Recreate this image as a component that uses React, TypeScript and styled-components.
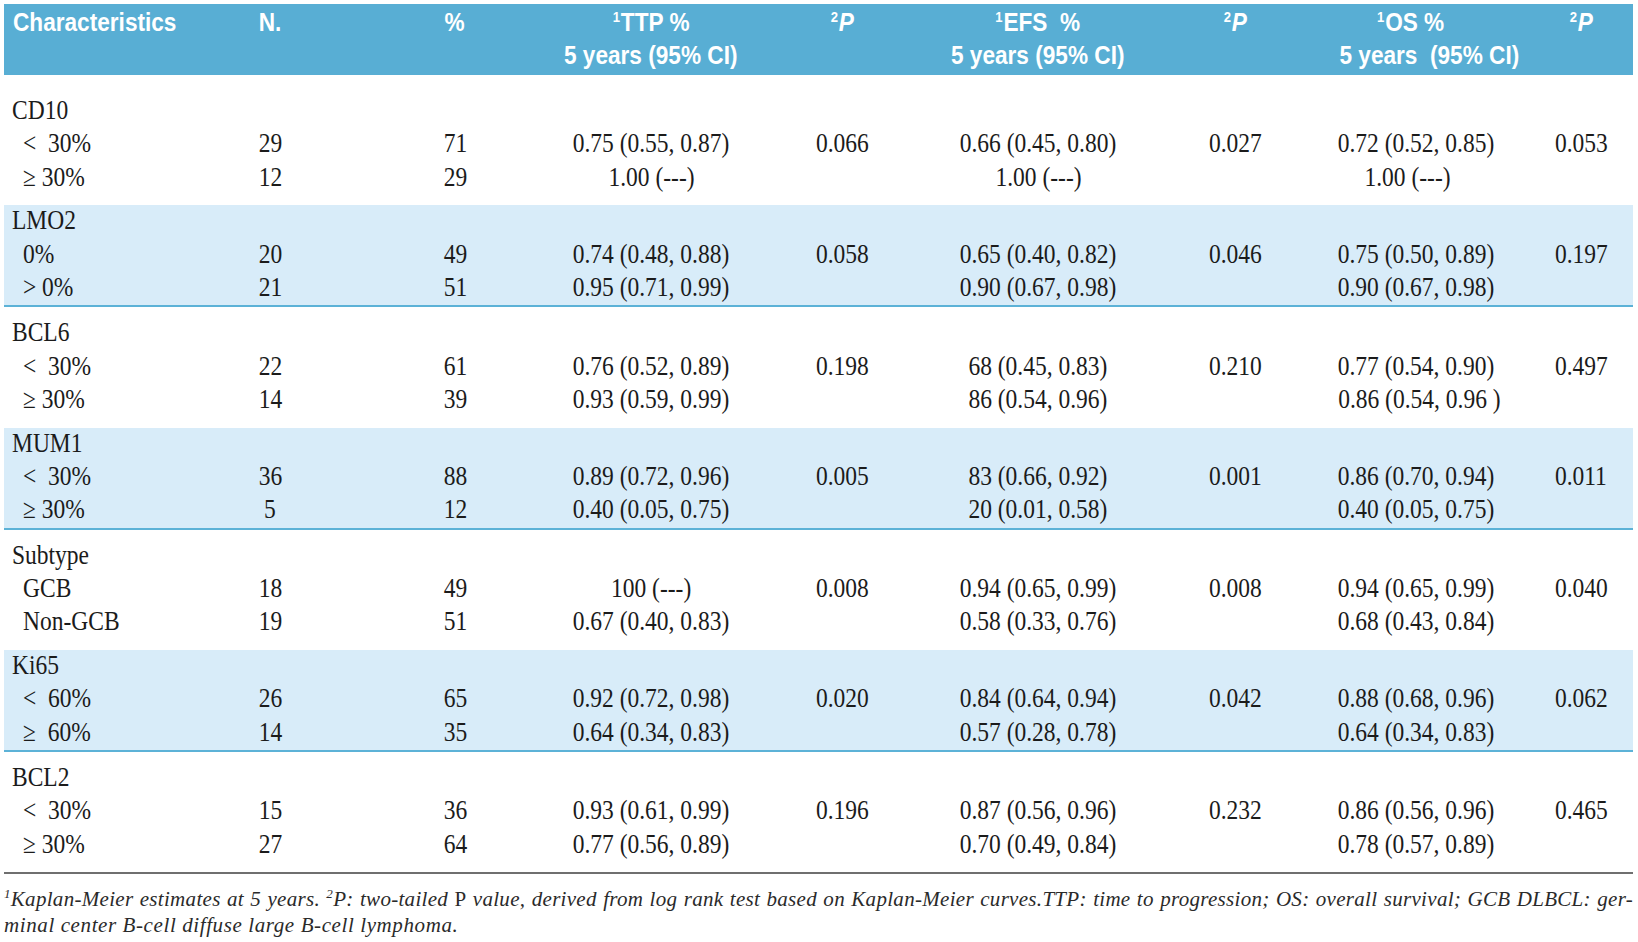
import React from 'react';
import styled, { createGlobalStyle } from 'styled-components';

const GlobalStyle = createGlobalStyle`
  html, body {
    margin: 0;
    padding: 0;
    background: #ffffff;
  }
  body {
    font-family: 'Liberation Serif', 'Times New Roman', serif;
    color: #1b1b1b;
  }
`;

// widths of the nine columns, table starts at x=4
const COLS = '176px 180px 190px 202px 180px 212px 182px 203px 104px';

const Page = styled.div`
  width: 1629px;
  padding: 4px 5px 0 4px;
`;

const Head = styled.div`
  display: grid;
  grid-template-columns: ${COLS};
  background: #58aed4;
  color: #ffffff;
  font-family: 'Liberation Sans', Arial, sans-serif;
  font-weight: bold;
  font-size: 26px;
  line-height: 33px;
  padding: 2px 0 3px;
`;

const HeadCell = styled.div<{ $left?: boolean; $padRight?: number }>`
  text-align: ${(p) => (p.$left ? 'left' : 'center')};
  padding-left: ${(p) => (p.$left ? '9px' : '0')};
  padding-right: ${(p) => p.$padRight || 0}px;
  white-space: pre;
`;

const Line = styled.div`
  height: 33px;
`;

const Squeeze = styled.span<{ $left?: boolean }>`
  display: inline-block;
  white-space: pre;
  transform: scaleX(0.87);
  transform-origin: ${(p) => (p.$left ? 'left' : 'center')} center;
`;

const Sup = styled.span`
  font-size: 15px;
  line-height: 0;
  vertical-align: 9px;
  margin-right: 1px;
`;

const ItalicP = styled.i`
  font-style: italic;
`;

const Body = styled.div`
  border-bottom: 2px solid #6f6f6f;
`;

const Group = styled.div<{ $band: boolean; $top: number; $bottom: number }>`
  background: ${(p) => (p.$band ? '#d8ecf9' : '#ffffff')};
  border-bottom: ${(p) => (p.$band ? '2px solid #5cb2d7' : 'none')};
  padding: ${(p) => p.$top}px 0 ${(p) => p.$bottom}px;
`;

const Row = styled.div`
  display: grid;
  grid-template-columns: ${COLS};
  height: 33.4px;
  font-size: 27px;
  line-height: 30px;
`;

const Cell = styled.div<{ $indent?: number; $padRight?: number }>`
  text-align: ${(p) => (p.$indent !== undefined ? 'left' : 'center')};
  padding-left: ${(p) => p.$indent || 0}px;
  padding-right: ${(p) => p.$padRight || 0}px;
  white-space: pre;
`;

const Note = styled.div`
  font-family: 'Liberation Serif', 'Times New Roman', serif;
  font-style: italic;
  font-size: 21px;
  line-height: 26px;
  color: #2a2a2a;
  padding: 12px 0 0 0;
`;

const NoteLine = styled.div<{ $justify?: boolean }>`
  text-align: ${(p) => (p.$justify ? 'justify' : 'left')};
  text-align-last: ${(p) => (p.$justify ? 'justify' : 'auto')};
  letter-spacing: ${(p) => (p.$justify ? '0.3px' : '0.6px')};
  white-space: nowrap;
`;

const NoteSup = styled.span`
  font-size: 13px;
  line-height: 0;
  vertical-align: 8px;
`;

const Upright = styled.span`
  font-style: normal;
`;

type Values = [string, string, string, string, string, string, string, string, string];

interface GroupData {
  name: string;
  band: boolean;
  top: number;
  bottom: number;
  rows: Values[];
}

const groups: GroupData[] = [
  {
    name: 'CD10',
    band: false,
    top: 20,
    bottom: 10,
    rows: [
      ['<  30%', '29', '71', '0.75 (0.55, 0.87)', '0.066', '0.66 (0.45, 0.80)', '0.027', '0.72 (0.52, 0.85)', '0.053'],
      ['≥ 30%', '12', '29', '1.00 (---)', '', '1.00 (---)', '', '1.00 (---)', ''],
    ],
  },
  {
    name: 'LMO2',
    band: true,
    top: 0,
    bottom: 0,
    rows: [
      ['0%', '20', '49', '0.74 (0.48, 0.88)', '0.058', '0.65 (0.40, 0.82)', '0.046', '0.75 (0.50, 0.89)', '0.197'],
      ['> 0%', '21', '51', '0.95 (0.71, 0.99)', '', '0.90 (0.67, 0.98)', '', '0.90 (0.67, 0.98)', ''],
    ],
  },
  {
    name: 'BCL6',
    band: false,
    top: 10,
    bottom: 10,
    rows: [
      ['<  30%', '22', '61', '0.76 (0.52, 0.89)', '0.198', '68 (0.45, 0.83)', '0.210', '0.77 (0.54, 0.90)', '0.497'],
      ['≥ 30%', '14', '39', '0.93 (0.59, 0.99)', '', '86 (0.54, 0.96)', '', '0.86 (0.54, 0.96 )', ''],
    ],
  },
  {
    name: 'MUM1',
    band: true,
    top: 0,
    bottom: 0,
    rows: [
      ['<  30%', '36', '88', '0.89 (0.72, 0.96)', '0.005', '83 (0.66, 0.92)', '0.001', '0.86 (0.70, 0.94)', '0.011'],
      ['≥ 30%', '5', '12', '0.40 (0.05, 0.75)', '', '20 (0.01, 0.58)', '', '0.40 (0.05, 0.75)', ''],
    ],
  },
  {
    name: 'Subtype',
    band: false,
    top: 10,
    bottom: 10,
    rows: [
      ['GCB', '18', '49', '100 (---)', '0.008', '0.94 (0.65, 0.99)', '0.008', '0.94 (0.65, 0.99)', '0.040'],
      ['Non-GCB', '19', '51', '0.67 (0.40, 0.83)', '', '0.58 (0.33, 0.76)', '', '0.68 (0.43, 0.84)', ''],
    ],
  },
  {
    name: 'Ki65',
    band: true,
    top: 0,
    bottom: 0,
    rows: [
      ['<  60%', '26', '65', '0.92 (0.72, 0.98)', '0.020', '0.84 (0.64, 0.94)', '0.042', '0.88 (0.68, 0.96)', '0.062'],
      ['≥  60%', '14', '35', '0.64 (0.34, 0.83)', '', '0.57 (0.28, 0.78)', '', '0.64 (0.34, 0.83)', ''],
    ],
  },
  {
    name: 'BCL2',
    band: false,
    top: 10,
    bottom: 10,
    rows: [
      ['<  30%', '15', '36', '0.93 (0.61, 0.99)', '0.196', '0.87 (0.56, 0.96)', '0.232', '0.86 (0.56, 0.96)', '0.465'],
      ['≥ 30%', '27', '64', '0.77 (0.56, 0.89)', '', '0.70 (0.49, 0.84)', '', '0.78 (0.57, 0.89)', ''],
    ],
  },
];

// OS column is wider than its text, the text sits left of the box centre
const OS_HEAD_PAD = 33;
const OS_DATA_PAD = 41;

const PHead = () => (
  <HeadCell>
    <Line>
      <Squeeze>
        <Sup>2</Sup>
        <ItalicP>P</ItalicP>
      </Squeeze>
    </Line>
  </HeadCell>
);

const SurvivalHead = ({ label, sub, padRight }: { label: string; sub: string; padRight?: number }) => (
  <HeadCell $padRight={padRight}>
    <Line>
      <Squeeze>
        <Sup>1</Sup>
        {label}
      </Squeeze>
    </Line>
    <Line>
      <Squeeze>{sub}</Squeeze>
    </Line>
  </HeadCell>
);

const TableHead = () => (
  <Head>
    <HeadCell $left>
      <Line>
        <Squeeze $left>Characteristics</Squeeze>
      </Line>
    </HeadCell>
    <HeadCell>
      <Line>
        <Squeeze>N.</Squeeze>
      </Line>
    </HeadCell>
    <HeadCell>
      <Line>
        <Squeeze>%</Squeeze>
      </Line>
    </HeadCell>
    <SurvivalHead label="TTP %" sub="5 years (95% CI)" />
    <PHead />
    <SurvivalHead label="EFS  %" sub="5 years (95% CI)" />
    <PHead />
    <SurvivalHead label="OS %" sub="5 years  (95% CI)" padRight={OS_HEAD_PAD} />
    <PHead />
  </Head>
);

const DataRow = ({ values }: { values: Values }) => (
  <Row>
    <Cell $indent={19}>
      <Squeeze $left>{values[0]}</Squeeze>
    </Cell>
    {values.slice(1).map((v, i) => (
      <Cell key={i} $padRight={i === 6 ? OS_DATA_PAD : 0}>
        <Squeeze>{v}</Squeeze>
      </Cell>
    ))}
  </Row>
);

const GroupBlock = ({ group }: { group: GroupData }) => (
  <Group $band={group.band} $top={group.top} $bottom={group.bottom}>
    <Row>
      <Cell $indent={8}>
        <Squeeze $left>{group.name}</Squeeze>
      </Cell>
    </Row>
    {group.rows.map((r, i) => (
      <DataRow key={i} values={r} />
    ))}
  </Group>
);

export default function App() {
  return (
    <>
      <GlobalStyle />
      <Page>
        <TableHead />
        <Body>
          {groups.map((g) => (
            <GroupBlock key={g.name} group={g} />
          ))}
        </Body>
        <Note>
          <NoteLine $justify>
            <NoteSup>1</NoteSup>Kaplan-Meier estimates at 5 years. <NoteSup>2</NoteSup>P: two-tailed <Upright>P</Upright> value,
            derived from log rank test based on Kaplan-Meier curves.TTP: time to progression; OS: overall survival; GCB DLBCL: ger-
          </NoteLine>
          <NoteLine>minal center B-cell diffuse large B-cell lymphoma.</NoteLine>
        </Note>
      </Page>
    </>
  );
}
